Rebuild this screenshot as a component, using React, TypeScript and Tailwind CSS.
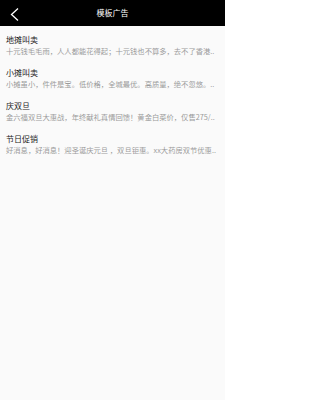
const ads = [
  {
    title: "地摊叫卖",
    desc: "十元钱毛毛雨，人人都能花得起；十元钱也不算多，去不了香港..",
  },
  {
    title: "小摊叫卖",
    desc: "小摊虽小，件件是宝。低价格，全城最优。高质量，绝不忽悠。..",
  },
  {
    title: "庆双旦",
    desc: "金六福双旦大惠战，年终献礼真情回馈！黄金白菜价，仅售275/..",
  },
  {
    title: "节日促销",
    desc: "好消息，好消息！迎圣诞庆元旦 ，双旦钜惠。xx大药房双节优惠..",
  },
];

export default function App() {
  return (
    <div
      className="w-[225px] h-[400px] bg-[#fafafa] flex flex-col"
      style={{ fontFamily: '"Noto Sans CJK SC", "Noto Sans", sans-serif' }}
    >
      <div className="h-[26px] bg-black flex items-center relative shrink-0">
        <svg className="absolute left-0 top-0" width="26" height="26" viewBox="0 0 26 26">
          <polyline points="18,8.5 11.5,14.5 18,20.5" fill="none" stroke="white" strokeWidth="1.3" />
        </svg>
        <div className="flex-1 text-center text-white text-[8px]">模板广告</div>
      </div>
      <div className="flex flex-col">
        {ads.map((ad) => (
          <div key={ad.title} className="px-[6px] pt-[9px] pb-[4px]">
            <div className="text-[8px] leading-[9px] text-[#1a1a1a]">{ad.title}</div>
            <div className="mt-[3px] text-[7.3px] leading-[8px] text-[#9a9a9a] whitespace-nowrap">{ad.desc}</div>
          </div>
        ))}
      </div>
    </div>
  );
}
